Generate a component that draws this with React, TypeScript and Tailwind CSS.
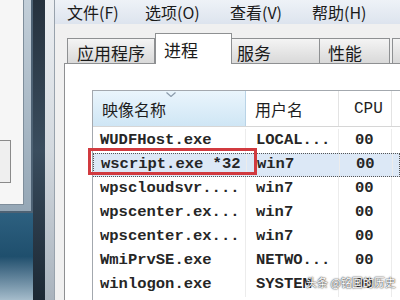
import React from "react";

const rows = [
  { name: "WUDFHost.exe", user: "LOCAL...", cpu: "00" },
  { name: "wscript.exe *32", user: "win7", cpu: "00", sel: true },
  { name: "wpscloudsvr....", user: "win7", cpu: "00" },
  { name: "wpscenter.ex...", user: "win7", cpu: "00" },
  { name: "wpscenter.ex...", user: "win7", cpu: "00" },
  { name: "WmiPrvSE.exe", user: "NETWO...", cpu: "00" },
  { name: "winlogon.exe", user: "SYSTEM", cpu: "00" },
];

const cjk = { fontFamily: '"Noto Sans CJK SC", "Noto Sans", sans-serif' };
const mono = { fontFamily: '"Liberation Mono", "DejaVu Sans Mono", monospace' };

export default function App() {
  return (
    <div className="relative flex h-[300px] w-[400px] overflow-hidden bg-white" style={cjk}>
      {/* desktop strip */}
      <div className="flex h-full w-[45px]">
        <div className="flex h-full w-[33px] flex-col bg-gradient-to-b from-[#2f5f7c] via-[#1e4d69] to-[#8fa9bb]">
          <div className="flex h-[213px] w-[33px] bg-gradient-to-b from-[#c3cfd9] to-[#95a7b6] border-r-2 border-b-2 border-[#4e6274]">
            <div className="flex h-[205px] w-[24px] flex-col bg-[#f6f6f6] border-r border-b border-[#7f8e9b]">
              <div className="mt-[140px] h-[43px] w-[11px] border border-l-0 border-[#8a8a8a] bg-[#efefef]" />
            </div>
          </div>
          <div className="flex-1 bg-gradient-to-b from-[#2d6080] via-[#1f4f6d] to-[#a5bccb]" />
        </div>
        <div className="h-full w-[12px] bg-gradient-to-b from-[#26323e] via-[#3a4d5e] to-[#1c2834]" />
      </div>
      {/* task manager frame */}
      <div className="h-full w-[10px] bg-gradient-to-b from-[#eceff2] via-[#d3d9df] to-[#a9b3bd] border-r border-[#98a2ac]" />
      {/* client */}
      <div className="flex h-full flex-1 flex-col bg-[#f0f0f0]">
        <div className="flex h-[24px] items-center bg-gradient-to-b from-[#eef2f7] to-[#dde4ee] pl-[12px] text-[16px] leading-none text-[#1a1a1a]">
          <span className="w-[78px]">文件(F)</span>
          <span className="w-[85px]">选项(O)</span>
          <span className="w-[82px]">查看(V)</span>
          <span>帮助(H)</span>
        </div>
        <div className="flex h-[39px] items-end pl-[12px] text-[17px] leading-none text-[#1a1a1a]">
          <div className="flex h-[25px] w-[88px] items-center justify-center border border-b-0 border-[#8e9092] bg-gradient-to-b from-[#f4f4f4] to-[#d9d9d9] pt-[3px]">应用程序</div>
          <div className="relative z-10 -mb-px flex h-[31px] w-[77px] items-start justify-start border border-b-0 border-[#8e9092] bg-white pl-[8px] pt-[7px]">进程</div>
          <div className="flex h-[25px] w-[88px] items-center justify-start border border-l-0 border-b-0 border-[#8e9092] bg-gradient-to-b from-[#f4f4f4] to-[#d9d9d9] pl-[5px] pt-[3px]">服务</div>
          <div className="flex h-[25px] w-[70px] items-center justify-start border border-l-0 border-b-0 border-[#8e9092] bg-gradient-to-b from-[#f4f4f4] to-[#d9d9d9] pl-[8px] pt-[3px]">性能</div>
          <div className="ml-[2px] h-[25px] flex-1 border border-r-0 border-b-0 border-[#8e9092] bg-gradient-to-b from-[#f4f4f4] to-[#d9d9d9]" />
        </div>
        <div className="ml-[9px] flex-1 border-l border-t border-[#8e9092] bg-white pl-[27px] pt-[26px]">
          <div className="h-full border-l border-t border-[#a3a8ae]">
            {/* header */}
            <div className="flex h-[36px] border-b border-[#d6d6d6] text-[16px] leading-none text-[#1e1e1e]">
              <div className="relative flex w-[153px] items-center bg-gradient-to-b from-[#eaf5fc] to-[#cfe6f5] border-r border-[#b9d3e6] pl-[9px]">
                映像名称
                <svg className="absolute left-[73px] top-[1px]" width="10" height="5" viewBox="0 0 10 5">
                  <path d="M0.5 0.5 L5 4.5 L9.5 0.5" fill="none" stroke="#8b9bab" strokeWidth="1.2" />
                </svg>
              </div>
              <div className="flex w-[93px] items-center border-r border-[#e3e3e3] pl-[9px]">用户名</div>
              <div className="flex w-[53px] items-center border-r border-[#e3e3e3] pl-[15px] text-[16px]" style={mono}>CPU</div>
              <div className="flex-1" />
            </div>
            {/* rows */}
            <div style={mono} className="pt-[2px] text-[15.5px] font-bold leading-none text-[#262626]">
              {rows.map((r, i) => (
                <div
                  key={i}
                  className={
                    "flex h-[24px] " +
                    (r.sel ? "bg-[#dce8f6] border border-dotted border-[#555]" : "")
                  }
                >
                  <div className="flex w-[153px] items-center border-r border-[#ececec] pl-[7px] whitespace-pre">{r.name}</div>
                  <div className="flex w-[93px] items-center border-r border-[#ececec] pl-[10px]">{r.user}</div>
                  <div className="flex w-[53px] items-center border-r border-[#ececec] pl-[16px]">{r.cpu}</div>
                  <div className="flex-1" />
                </div>
              ))}
            </div>
          </div>
        </div>
      </div>
      {/* red highlight box */}
      <div className="absolute left-[88px] top-[148px] h-[27px] w-[169px] border-[3px] border-[#d13a3f]" />
      {/* watermark */}
      <div
        className="absolute left-[306px] top-[277px] text-[11px] leading-none text-white"
        style={{ textShadow: "0 0 2px #333, 0 0 1px #333" }}
      >
        头条 @铭国的历史
      </div>
    </div>
  );
}
